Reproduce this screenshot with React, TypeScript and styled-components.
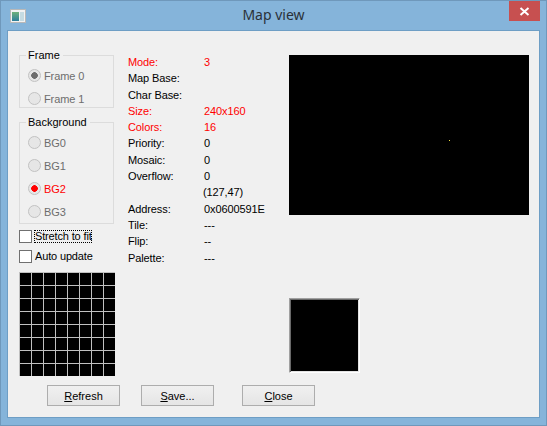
import React from "react";
import styled, { createGlobalStyle } from "styled-components";

const GlobalStyle = createGlobalStyle`
  html, body {
    margin: 0;
    padding: 0;
    background: #85b4da;
  }
  * {
    box-sizing: border-box;
  }
`;

const Window = styled.div`
  width: 547px;
  height: 426px;
  display: flex;
  flex-direction: column;
  background: #85b4da;
  border: 1px solid #6f98bb;
  font-family: "Liberation Sans", Arial, sans-serif;
  font-size: 11px;
  color: #000;
  overflow: hidden;
`;

const TitleBar = styled.div`
  height: 29px;
  flex: none;
  display: grid;
  grid-template-columns: 1fr auto 1fr;
  align-items: start;
`;

const AppIcon = styled.svg`
  display: block;
  margin: 8px 0 0 9px;
`;

const Title = styled.div`
  font-family: "Noto Sans", sans-serif;
  font-size: 14px;
  line-height: 20px;
  padding-top: 4px;
  color: #2a3138;
`;

const CloseButton = styled.div`
  justify-self: end;
  width: 31px;
  height: 20px;
  margin-right: 6px;
  background: #c75050;
  display: flex;
  align-items: center;
  justify-content: center;
`;

const Client = styled.div`
  flex: 1;
  margin: 0 6px 7px 6px;
  padding: 24px 0 0 11px;
  background: #f0f0f0;
  border: 1px solid #6e9ec5;
`;

const Columns = styled.div`
  display: flex;
`;

const LeftColumn = styled.div`
  width: 96px;
  margin-right: 13px;
  display: flex;
  flex-direction: column;
`;

const Group = styled.div<{ $height: number; $gap?: number }>`
  position: relative;
  height: ${(p) => p.$height}px;
  width: 95px;
  margin-bottom: ${(p) => p.$gap ?? 0}px;
  padding: 8px 0 0 8px;
  border: 1px solid #dcdcdc;
`;

const GroupLabel = styled.span`
  position: absolute;
  top: -7px;
  left: 6px;
  padding: 0 3px 0 2px;
  line-height: 13px;
  background: #f0f0f0;
`;

const RadioRow = styled.label<{ $red?: boolean }>`
  height: 23px;
  display: flex;
  align-items: center;
  gap: 3px;
  letter-spacing: -0.1px;
  color: ${(p) => (p.$red ? "#ff0000" : "#6d6d6d")};
`;

const Radio = styled.input<{ $dot?: string }>`
  appearance: none;
  width: 13px;
  height: 13px;
  margin: 0;
  border: 1px solid #c2c2c2;
  border-radius: 50%;
  background: ${(p) =>
    p.$dot
      ? `radial-gradient(circle, ${p.$dot} 3px, #e6e6e6 3.6px)`
      : "#e6e6e6"};
`;

const CheckRow = styled.label<{ $gap: number }>`
  height: 13px;
  margin-bottom: ${(p) => p.$gap}px;
  display: flex;
  align-items: center;
  gap: 2px;
`;

const Check = styled.input`
  appearance: none;
  flex: none;
  width: 13px;
  height: 13px;
  margin: 0;
  border: 1px solid #707070;
  background: #fff;
`;

const CheckText = styled.span<{ $focus?: boolean }>`
  height: 13px;
  line-height: 12px;
  white-space: nowrap;
  padding: 0 0 0 1px;
  letter-spacing: -0.15px;
  ${(p) => (p.$focus ? "outline: 1px dotted #000; outline-offset: -1px;" : "")}
`;

const TileGrid = styled.div`
  width: 96px;
  height: 104px;
  padding: 1px 0 0 1px;
  display: grid;
  grid-template-columns: repeat(8, 11px);
  grid-auto-rows: 12px;
  gap: 1px;
  background: #c0c0c0;
`;

const Tile = styled.div`
  background: #000;
`;

const InfoColumn = styled.div`
  width: 161px;
  display: grid;
  grid-template-columns: 76px 1fr;
  grid-auto-rows: 16.3px;
  align-content: start;
`;

const InfoCell = styled.div<{ $red?: boolean; $shift?: boolean }>`
  line-height: 14px;
  white-space: nowrap;
  letter-spacing: -0.1px;
  margin-left: ${(p) => (p.$shift ? -1 : 0)}px;
  color: ${(p) => (p.$red ? "#ff0000" : "#000")};
`;

const RightColumn = styled.div`
  display: flex;
  flex-direction: column;
  align-items: flex-start;
`;

const Screen = styled.div`
  position: relative;
  width: 240px;
  height: 160px;
  background: #000;
`;

const ScreenDot = styled.div`
  position: absolute;
  left: 160px;
  top: 85px;
  width: 1px;
  height: 1px;
  background: #f0e040;
`;

const Zoomed = styled.div`
  width: 71px;
  height: 75px;
  margin-top: 83px;
  background: #000;
  border-style: solid;
  border-width: 1px;
  border-color: #a0a0a0 #fff #fff #a0a0a0;
  box-shadow: inset 1px 1px 0 #696969, inset -1px -1px 0 #e3e3e3;
`;

const ButtonRow = styled.div`
  display: flex;
  margin: 9px 0 0 28px;
`;

const Button = styled.button<{ $left: number }>`
  width: 73px;
  height: 21px;
  margin-left: ${(p) => p.$left}px;
  padding: 0;
  border: 1px solid #adadad;
  background: linear-gradient(#f0f0f0, #e5e5e5);
  font: inherit;
  color: #000;
`;

const infoRows: { label: string; value: string; red?: boolean; shift?: boolean }[] = [
  { label: "Mode:", value: "3", red: true },
  { label: "Map Base:", value: "" },
  { label: "Char Base:", value: "" },
  { label: "Size:", value: "240x160", red: true },
  { label: "Colors:", value: "16", red: true },
  { label: "Priority:", value: "0" },
  { label: "Mosaic:", value: "0" },
  { label: "Overflow:", value: "0" },
  { label: "", value: "(127,47)", shift: true },
  { label: "Address:", value: "0x0600591E" },
  { label: "Tile:", value: "---" },
  { label: "Flip:", value: "--" },
  { label: "Palette:", value: "---" },
];

const tiles = Array.from({ length: 64 });

const App: React.FC = () => {
  return (
    <Window>
      <GlobalStyle />
      <TitleBar>
        <AppIcon width="16" height="14" viewBox="0 0 16 14">
          <defs>
            <linearGradient id="iconPanel" x1="0" y1="0" x2="0" y2="1">
              <stop offset="0" stopColor="#6fb07a" />
              <stop offset="1" stopColor="#2d7f9c" />
            </linearGradient>
          </defs>
          <rect x="0.5" y="0.5" width="15" height="13" fill="#f2f2f2" stroke="#b8b8b8" />
          <rect x="2" y="3" width="7" height="9" fill="url(#iconPanel)" />
          <rect x="10" y="3" width="4" height="9" fill="#c5dbe2" />
        </AppIcon>
        <Title>Map view</Title>
        <CloseButton>
          <svg width="11" height="9" viewBox="0 0 11 9">
            <path d="M1.5 1 L9.5 8 M9.5 1 L1.5 8" stroke="#fff" strokeWidth="2" />
          </svg>
        </CloseButton>
      </TitleBar>
      <Client>
        <Columns>
          <LeftColumn>
            <Group $height={53} $gap={14}>
              <GroupLabel>Frame</GroupLabel>
              <RadioRow>
                <Radio type="radio" disabled $dot="#6d6d6d" />
                Frame 0
              </RadioRow>
              <RadioRow>
                <Radio type="radio" disabled />
                Frame 1
              </RadioRow>
            </Group>
            <Group $height={102} $gap={6}>
              <GroupLabel>Background</GroupLabel>
              {["BG0", "BG1", "BG2", "BG3"].map((bg) => (
                <RadioRow key={bg} $red={bg === "BG2"}>
                  <Radio type="radio" disabled $dot={bg === "BG2" ? "#ff0000" : undefined} />
                  {bg}
                </RadioRow>
              ))}
            </Group>
            <CheckRow $gap={7}>
              <Check type="checkbox" />
              <CheckText $focus>Stretch to fit</CheckText>
            </CheckRow>
            <CheckRow $gap={9}>
              <Check type="checkbox" />
              <CheckText>Auto update</CheckText>
            </CheckRow>
            <TileGrid>
              {tiles.map((_, i) => (
                <Tile key={i} />
              ))}
            </TileGrid>
          </LeftColumn>
          <InfoColumn>
            {infoRows.map((row, i) => (
              <React.Fragment key={i}>
                <InfoCell $red={row.red}>{row.label}</InfoCell>
                <InfoCell $red={row.red} $shift={row.shift}>
                  {row.value}
                </InfoCell>
              </React.Fragment>
            ))}
          </InfoColumn>
          <RightColumn>
            <Screen>
              <ScreenDot />
            </Screen>
            <Zoomed />
          </RightColumn>
        </Columns>
        <ButtonRow>
          <Button $left={0}>
            <u>R</u>efresh
          </Button>
          <Button $left={21}>
            <u>S</u>ave...
          </Button>
          <Button $left={28}>
            <u>C</u>lose
          </Button>
        </ButtonRow>
      </Client>
    </Window>
  );
};

export default App;
